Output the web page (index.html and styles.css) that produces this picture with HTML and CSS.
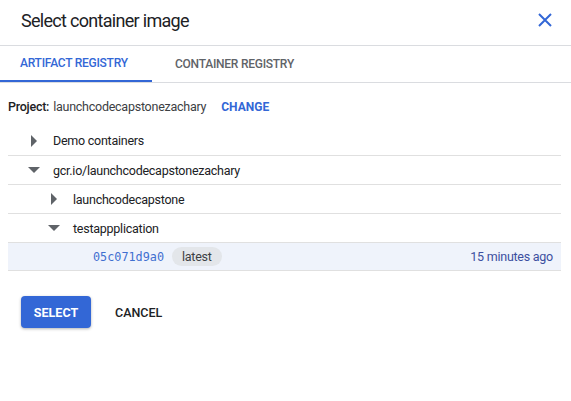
FILE: index.html
```html
<!DOCTYPE html>
<html>
<head>
<meta charset="utf-8">
<link rel="stylesheet" href="styles.css">
</head>
<body>
<div class="dialog">
  <header class="head">
    <h1 class="title">Select container image</h1>
    <button class="close" aria-label="Close">
      <svg width="14" height="14" viewBox="0 0 14 14"><path d="M1 1L13 13M13 1L1 13" stroke="#3367d6" stroke-width="2" fill="none"/></svg>
    </button>
  </header>
  <nav class="tabs">
    <div class="tab active">ARTIFACT REGISTRY</div>
    <div class="tab">CONTAINER REGISTRY</div>
  </nav>
  <div class="project">
    <span class="label">Project:</span>
    <span class="pname">launchcodecapstonezachary</span>
    <span class="change">CHANGE</span>
  </div>
  <div class="tree">
    <div class="row lvl1"><span class="tri right"></span><span>Demo containers</span></div>
    <div class="row lvl1"><span class="tri down"></span><span>gcr.io/launchcodecapstonezachary</span></div>
    <div class="row lvl2"><span class="tri right"></span><span>launchcodecapstone</span></div>
    <div class="row lvl2"><span class="tri down"></span><span>testappplication</span></div>
    <div class="row leaf selected">
      <span class="hash">05c071d9a0</span>
      <span class="chip">latest</span>
      <span class="time">15 minutes ago</span>
    </div>
  </div>
  <div class="actions">
    <button class="btn primary">SELECT</button>
    <button class="btn text">CANCEL</button>
  </div>
</div>
</body>
</html>
```
FILE: styles.css
```css
* { box-sizing: border-box; }
html, body { margin: 0; padding: 0; background: #fff; }
body { font-family: Roboto, "Liberation Sans", Arial, sans-serif; color: #202124; }
.dialog { width: 571px; height: 401px; }
.head {
  height: 46px;
  display: flex;
  align-items: center;
  justify-content: space-between;
  padding: 0 19px 0 21px;
  border-bottom: 1px solid #dadce0;
}
.title { margin: 0; font-size: 18px; font-weight: 400; color: #202124; padding-bottom: 4px; letter-spacing: -0.7px; }
.close { border: 0; background: none; padding: 0; margin: 0; display: flex; margin-bottom: 6px; }
.tabs {
  display: flex;
  height: 37px;
  border-bottom: 1px solid #dadce0;
}
.tab {
  font-size: 12px;
  font-weight: 500;
  color: #5f6368;
  display: flex;
  align-items: center;
  padding: 0 20px;
  letter-spacing: -0.25px;
  white-space: nowrap;
}
.tab.active { color: #3367d6; border-bottom: 2px solid #3367d6; width: 152px; margin-right: 3px; }
.project {
  display: flex;
  align-items: center;
  gap: 4px;
  padding: 4px 8px 0;
  height: 43px;
  font-size: 12.5px;
  letter-spacing: -0.25px;
}
.label { font-weight: 500; }
.pname { color: #3c4043; }
.change { color: #3367d6; font-weight: 700; margin-left: 11px; letter-spacing: 0; font-size: 12px; }
.tree { margin: 0 10px 0 8px; }
.row {
  height: 29px;
  display: flex;
  align-items: center;
  font-size: 12.5px;
  letter-spacing: -0.25px;
  color: #202124;
  border-top: 1px solid #e0e0e0;
}
.row:first-child { border-top: 0; height: 29px; }
.row:last-child { border-bottom: 1px solid #e0e0e0; }
.lvl1 { padding-left: 18px; }
.lvl2 { padding-left: 38px; }
.tri { width: 27px; display: inline-flex; align-items: center; justify-content: flex-start; }
.tri.right::before {
  content: "";
  margin-left: 5px;
  border-left: 6px solid #5f6368;
  border-top: 6px solid transparent;
  border-bottom: 6px solid transparent;
}
.tri.down::before {
  content: "";
  margin-left: 2px;
  border-top: 6px solid #5f6368;
  border-left: 6px solid transparent;
  border-right: 6px solid transparent;
}
.leaf { padding-left: 85px; padding-right: 8px; }
.selected { background: #eff3fb; }
.hash { font-family: "DejaVu Sans Mono", "Liberation Mono", monospace; font-size: 11.8px; letter-spacing: 0; color: #3f6fd0; }
.chip {
  margin-left: 8px;
  background: #e3e6ea;
  border-radius: 10px;
  padding: 0 10px;
  height: 19px;
  display: inline-flex;
  align-items: center;
  font-size: 12.5px;
  color: #3c4043;
}
.time { margin-left: auto; color: #3c4fa0; }
.actions {
  display: flex;
  align-items: center;
  gap: 12px;
  padding: 25px 0 0 21px;
}
.btn {
  font-family: Roboto, "Liberation Sans", Arial, sans-serif;
  border: 0;
  font-size: 12.5px;
  font-weight: 700;
  height: 32px;
  border-radius: 4px;
  cursor: pointer;
}
.primary {
  background: #3367d6;
  color: #fff;
  width: 70px;
  box-shadow: 0 1px 3px rgba(0,0,0,0.3);
}
.text { background: none; color: #202124; font-weight: 500; padding: 0 12px; }
```
